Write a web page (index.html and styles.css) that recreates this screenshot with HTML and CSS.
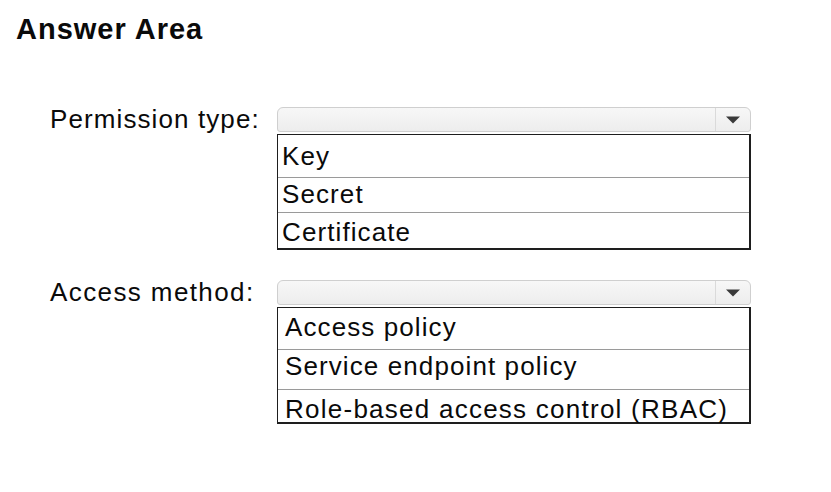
FILE: index.html
```html
<!DOCTYPE html>
<html>
<head>
<meta charset="utf-8">
<link rel="stylesheet" href="styles.css">
</head>
<body>
<div class="page">
  <h1 class="title">Answer Area</h1>
  <div class="field field-first">
    <div class="label">Permission type:</div>
    <div class="control">
      <div class="select">
        <div class="select-value"></div>
        <div class="select-btn">
          <svg width="16" height="8" viewBox="0 0 16 8"><path d="M1 0.5 L15 0.5 L8 7.5 Z" fill="#3a3a3a"/></svg>
        </div>
      </div>
      <div class="options">
        <div class="opt a1">Key</div>
        <div class="opt a2">Secret</div>
        <div class="opt a3">Certificate</div>
      </div>
    </div>
  </div>
  <div class="field field-second">
    <div class="label">Access method:</div>
    <div class="control">
      <div class="select">
        <div class="select-value"></div>
        <div class="select-btn">
          <svg width="16" height="8" viewBox="0 0 16 8"><path d="M1 0.5 L15 0.5 L8 7.5 Z" fill="#3a3a3a"/></svg>
        </div>
      </div>
      <div class="options">
        <div class="opt b1">Access policy</div>
        <div class="opt b2">Service endpoint policy</div>
        <div class="opt b3">Role-based access control (RBAC)</div>
      </div>
    </div>
  </div>
</div>
</body>
</html>
```

FILE: styles.css
```css
html, body {
  margin: 0;
  padding: 0;
  background: #ffffff;
}
.page {
  width: 831px;
  height: 492px;
  font-family: "Liberation Sans", Arial, sans-serif;
  color: #0a0a0a;
}
.title {
  margin: 0;
  padding: 12px 0 0 16px;
  font-size: 29px;
  line-height: 34px;
  font-weight: bold;
  letter-spacing: 1px;
  color: #0a0a0a;
}
.field {
  display: grid;
  grid-template-columns: 227px 474px;
  padding-left: 50px;
}
.field-first {
  margin-top: 61px;
}
.field-second {
  margin-top: 30px;
}
.label {
  font-size: 26px;
  line-height: 24px;
  letter-spacing: 1.1px;
  white-space: nowrap;
}
.field-second .label {
  letter-spacing: 1.4px;
}
.select {
  display: flex;
  height: 25px;
  box-sizing: border-box;
  border: 1px solid #cfcfcf;
  border-radius: 6px 6px 3px 3px;
  background: linear-gradient(#f7f7f7, #ededed);
}
.select-value {
  flex: 1;
}
.select-btn {
  width: 34px;
  border-left: 1px solid #dadada;
  display: flex;
  align-items: center;
  justify-content: center;
  padding-top: 1px;
}
.options {
  margin-top: 2px;
  border: 1px solid #1e1e1e;
  border-width: 1px 2px 2px 1px;
}
.opt {
  box-sizing: border-box;
  font-size: 26px;
  line-height: 26px;
  letter-spacing: 1.1px;
  padding-left: 4px;
  border-top: 1px solid #9a9a9a;
  white-space: nowrap;
}
.opt:first-child {
  border-top: none;
}
.a1 { height: 42px; padding-top: 8px; }
.a2 { height: 35px; padding-top: 3px; }
.a3 { height: 36px; padding-top: 6px; }
.b1 { height: 41px; padding-top: 6px; padding-left: 7px; }
.b2 { height: 40px; padding-top: 3px; padding-left: 7px; }
.b3 { height: 33px; padding-top: 6px; padding-left: 7px; letter-spacing: 1.25px; }
```
